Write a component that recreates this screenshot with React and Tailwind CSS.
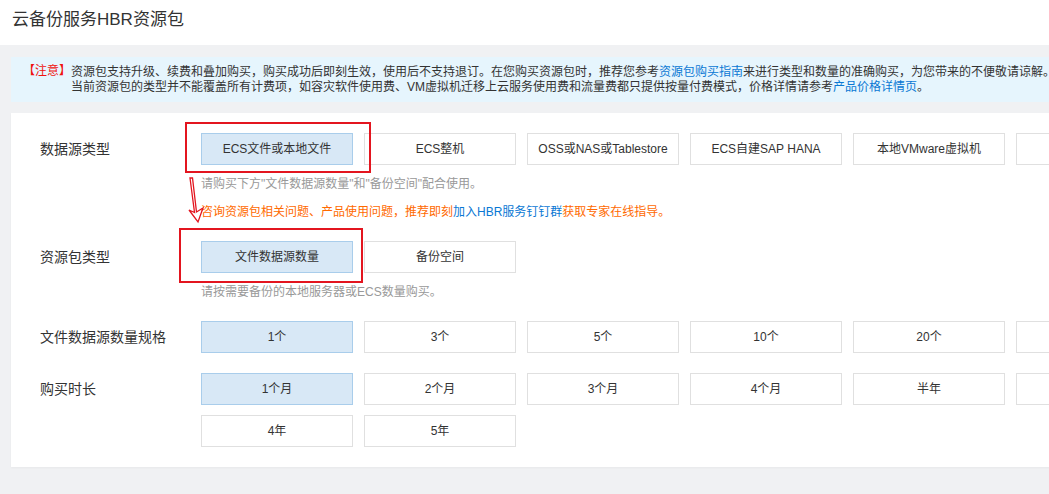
import React from "react";

const FONT = { fontFamily: '"Liberation Sans", "Noto Sans CJK SC", sans-serif' };

function Btn({ children, active }) {
  return (
    <div
      className={
        active
          ? "w-[152px] h-[32px] flex items-center justify-center text-[12px] text-[#333] bg-[#d8e8f6] border border-[#a9cdeb] whitespace-nowrap"
          : "w-[152px] h-[32px] flex items-center justify-center text-[12px] text-[#333] bg-white border border-[#e0e0e0] whitespace-nowrap"
      }
    >
      {children}
    </div>
  );
}

function Field({ label, items, active = 0, children }) {
  return (
    <div className="flex">
      <div className="w-[161px] h-[32px] flex items-center text-[14px] text-[#333] shrink-0">{label}</div>
      <div className="flex flex-col">
        <div className="flex flex-wrap gap-x-[11px] gap-y-[10px] w-[1400px]">
          {items.map((t, i) => (
            <Btn key={i} active={i === active}>
              {t}
            </Btn>
          ))}
        </div>
        {children}
      </div>
    </div>
  );
}

export default function App() {
  return (
    <div className="relative w-[1049px] h-[494px] overflow-hidden bg-[#f0f1f3]" style={FONT}>
      <div className="w-[1600px]">
        <div className="h-[45px] bg-white pl-[12px] pt-[10px]">
          <div className="text-[17px] leading-[20px] text-[#333]">云备份服务HBR资源包</div>
        </div>
        <div className="mx-[11px] mt-[12px] h-[45px] bg-[#e6f5fd] flex items-center pl-[12px] text-[12px] leading-[15px] text-[#333] whitespace-nowrap">
          <div className="self-start pt-[7px] text-[#f0120f]">【注意】</div>
          <div className="flex flex-col">
            <div>
              资源包支持升级、续费和叠加购买，购买成功后即刻生效，使用后不支持退订。在您购买资源包时，推荐您参考
              <span className="text-[#0a78d4]">资源包购买指南</span>
              来进行类型和数量的准确购买，为您带来的不便敬请谅解。
            </div>
            <div>
              当前资源包的类型并不能覆盖所有计费项，如容灾软件使用费、VM虚拟机迁移上云服务使用费和流量费都只提供按量付费模式，价格详情请参考
              <span className="text-[#0a78d4]">产品价格详情页</span>。
            </div>
          </div>
        </div>
        <div className="mx-[11px] mt-[11px] bg-white pl-[29px] pt-[20px] pb-[20px] flex flex-col gap-[20px] shadow-[0_1px_2px_rgba(0,0,0,0.04)]">
          <Field
            label="数据源类型"
            items={["ECS文件或本地文件", "ECS整机", "OSS或NAS或Tablestore", "ECS自建SAP HANA", "本地VMware虚拟机", "Hyper-V虚拟机"]}
          >
            <div className="mt-[10px] text-[12px] leading-[18px] text-[#999]">
              请购买下方"文件数据源数量"和"备份空间"配合使用。
            </div>
            <div className="mt-[10px] text-[12px] leading-[18px] text-[#ff6a00]">
              咨询资源包相关问题、产品使用问题，推荐即刻
              <span className="text-[#0a78d4]">加入HBR服务钉钉群</span>
              获取专家在线指导。
            </div>
          </Field>
          <Field label="资源包类型" items={["文件数据源数量", "备份空间"]}>
            <div className="mt-[10px] text-[12px] leading-[18px] text-[#999]">请按需要备份的本地服务器或ECS数量购买。</div>
          </Field>
          <Field label="文件数据源数量规格" items={["1个", "3个", "5个", "10个", "20个", "50个"]} />
          <Field
            label="购买时长"
            items={["1个月", "2个月", "3个月", "4个月", "半年", "1年", "2年", "3年", "4年", "5年"]}
          />
        </div>
      </div>

      {/* annotation overlays */}
      <div className="absolute left-[185px] top-[122px] w-[186px] h-[51px] border-2 border-[#e3151f]" />
      <div className="absolute left-[179px] top-[228px] w-[184px] h-[55px] border-2 border-[#e3151f]" />
      <svg className="absolute left-[183px] top-[175px]" width="24" height="50" viewBox="0 0 24 50">
        <polygon
          points="7,3 9.5,3 13.5,37 20,33 15,47 6,35 11.5,37.5"
          fill="none"
          stroke="#e3151f"
          strokeWidth="1.3"
          strokeLinejoin="miter"
        />
      </svg>
    </div>
  );
}
